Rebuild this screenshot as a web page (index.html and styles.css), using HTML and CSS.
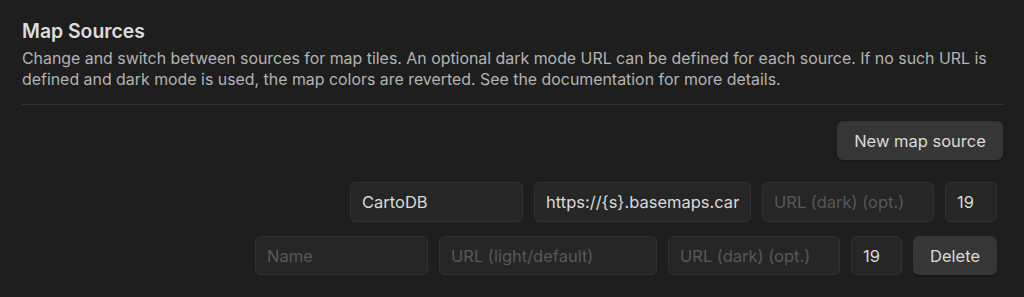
FILE: index.html
```html
<!DOCTYPE html>
<html>
<head>
<meta charset="utf-8">
<link rel="stylesheet" href="styles.css">
</head>
<body>
<div class="setting">
  <div class="heading">
    <div class="title">Map Sources</div>
    <div class="desc">Change and switch between sources for map tiles. An optional dark mode URL can be defined for each source. If no such URL is defined and dark mode is used, the map colors are reverted. See the documentation for more details.</div>
  </div>
  <div class="actions">
    <button class="btn btn-new">New map source</button>
  </div>
  <div class="row row-first">
    <input class="field w-name" type="text" value="CartoDB">
    <input class="field w-url" type="text" value="https://{s}.basemaps.cartocdn.com/rastertiles/voyager/{z}/{x}/{y}.png">
    <input class="field w-dark" type="text" placeholder="URL (dark) (opt.)">
    <input class="field w-zoom" type="text" value="19">
  </div>
  <div class="row">
    <input class="field w-name" type="text" placeholder="Name">
    <input class="field w-url2" type="text" placeholder="URL (light/default)">
    <input class="field w-dark" type="text" placeholder="URL (dark) (opt.)">
    <input class="field w-zoom2" type="text" value="19">
    <button class="btn btn-del">Delete</button>
  </div>
</div>
</body>
</html>
```

FILE: styles.css
```css
html, body {
  margin: 0;
  padding: 0;
  background: #1e1e1e;
  height: 100%;
}
body {
  font-family: Inter, "Noto Sans", sans-serif;
  color: #dadada;
}
.setting {
  padding: 18px 21px 0 22px;
}
.heading {
  border-bottom: 1px solid #363636;
  padding-bottom: 14px;
  margin-right: -1px;
}
.title {
  font-size: 19.4px;
  font-weight: 600;
  line-height: 26px;
  color: #dcdcdc;
}
.desc {
  margin-top: 4px;
  font-size: 15.9px;
  line-height: 21px;
  color: #b3b3b3;
}
.actions {
  display: flex;
  justify-content: flex-end;
  margin-top: 16px;
}
.btn {
  font-family: inherit;
  font-size: 16.5px;
  color: #dadada;
  background: #363636;
  border: none;
  border-radius: 6px;
  box-shadow: 0 1px 2px rgba(0,0,0,0.35);
  cursor: pointer;
}
.btn-new {
  width: 166px;
  height: 39px;
}
.row {
  display: flex;
  justify-content: flex-end;
  gap: 11px;
  padding-right: 6px;
  margin-top: 14px;
}
.row-first {
  margin-top: 22px;
}
.field {
  box-sizing: border-box;
  height: 40px;
  background: #262626;
  border: 1px solid #333333;
  border-radius: 6px;
  padding: 0 11px;
  font-family: inherit;
  font-size: 16.5px;
  color: #dadada;
  outline: none;
}
.field::placeholder {
  color: #585858;
}
.row:not(.row-first) .field {
  height: 39px;
}
.w-name { width: 173px; }
.w-url { width: 217px; }
.w-url2 { width: 218px; }
.w-dark { width: 172px; }
.w-zoom { width: 52px; }
.w-zoom2 { width: 51px; }
.btn-del {
  width: 84px;
  height: 39px;
}
```
